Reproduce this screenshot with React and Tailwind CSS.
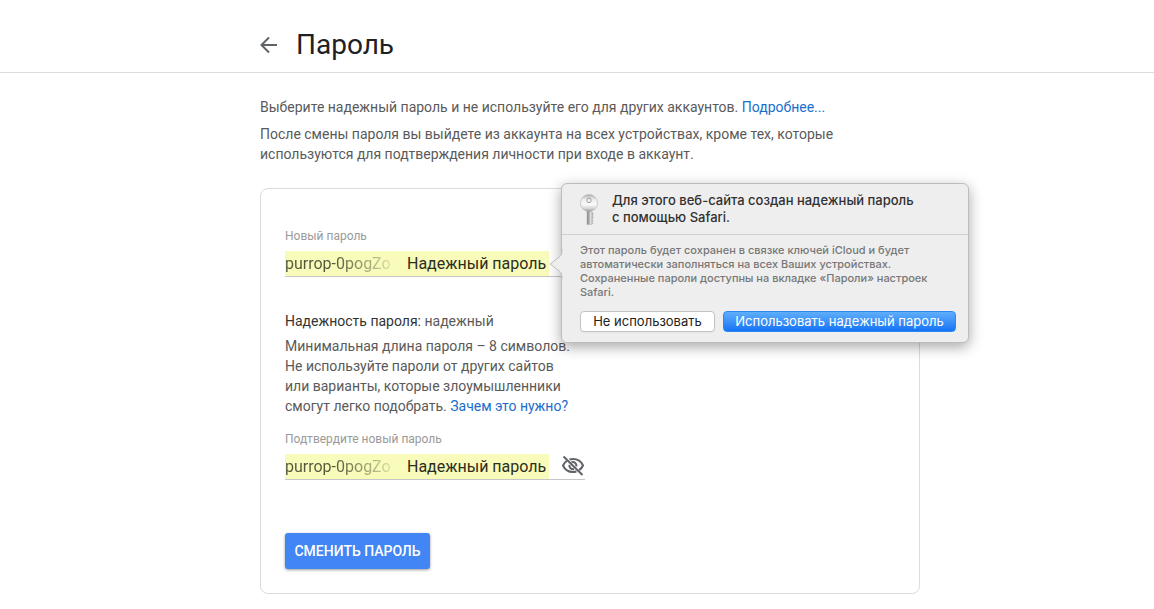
import { useState } from 'react';

const SUGGESTED = 'purrop-0pogZo';

function KeyIcon() {
  return (
    <svg width="22" height="33" viewBox="0 0 22 33" aria-hidden="true" className="shrink-0">
      <defs>
        <linearGradient id="keyHead" x1="0" y1="0" x2="0" y2="1">
          <stop offset="0" stopColor="#b0b0b0" />
          <stop offset="0.3" stopColor="#ededed" />
          <stop offset="0.6" stopColor="#fafafa" />
          <stop offset="0.85" stopColor="#cfcfcf" />
          <stop offset="1" stopColor="#909090" />
        </linearGradient>
        <linearGradient id="keyStem" x1="0" y1="0" x2="1" y2="0">
          <stop offset="0" stopColor="#7d7d7d" />
          <stop offset="0.4" stopColor="#f0f0f0" />
          <stop offset="1" stopColor="#a5a5a5" />
        </linearGradient>
      </defs>
      <path d="M9 17h4v2l2 1v2l-1 1 1.500 1.500-1.500 1.500 1 1.500-1 1.500 1 1.500-2 1H9z" fill="url(#keyStem)" stroke="#a0a0a0" strokeWidth="0.5" />
      <path d="M11 18v13" stroke="#6d6d6d" strokeWidth="0.8" />
      <circle cx="11" cy="10" r="8.500" fill="url(#keyHead)" stroke="#b0b0b0" strokeWidth="0.6" />
      <circle cx="11" cy="7.500" r="2.200" fill="#f0f0f0" stroke="#a0a0a0" strokeWidth="1" />
    </svg>
  );
}

function EyeOffIcon() {
  return (
    <svg width="24" height="24" viewBox="0 0 24 24" fill="none" stroke="#5f6368" strokeWidth="2" aria-hidden="true">
      <path d="M8.500 5.500C9.600 5.200 10.800 5 12 5c4.500 0 8.300 2.700 10 6.500-.8 1.900-2.200 3.600-3.900 4.700M15.500 17.500c-1.100.3-2.300.5-3.500.5-4.500 0-8.300-2.700-10-6.500.8-1.900 2.200-3.500 3.900-4.700" />
      <path d="M10.500 8.200c2.600-.9 5.300 1.200 4.900 4.100M13 15.200c-2.700.6-5-1.700-4.600-4.300" />
      <path d="M2.500 2.500l19 18.500" />
    </svg>
  );
}

function PasswordField({ id, label, value, onChange, children }) {
  return (
    <div className="w-[300px]">
      <label htmlFor={id} className="block text-[12px] leading-4 text-[#9a9a9a]">
        {label}
      </label>
      <div className="mt-[7px] flex items-start border-b border-[#c6c6c6]">
        <div className="flex h-[25px] w-[264px] shrink-0 items-center bg-[#f8fbb9] text-[16px]">
          <input
            id={id}
            type="text"
            value={value}
            onChange={onChange}
            className="w-[122px] bg-linear-to-r from-[#55573c] from-40% to-[#f8fbb9] to-95% bg-clip-text text-transparent outline-none"
          />
          <span className="whitespace-nowrap text-[#2c2d1c]">Надежный пароль</span>
        </div>
        {children}
      </div>
    </div>
  );
}

function SafariPopover({ onClose }) {
  return (
    <div
      role="dialog"
      aria-label="Надежный пароль"
      className="absolute top-[-45px] left-[276px] z-10 w-[408px] rounded-md border border-[#bdbdbd] bg-[#eeeeee] font-[Inter,sans-serif] shadow-[0_4px_14px_rgba(0,0,0,0.35)]"
    >
      <svg width="13" height="30" viewBox="0 0 13 30" aria-hidden="true" className="absolute top-[65px] -left-3">
        <path d="M13 0C12.500 5 11 7 8 9L0 15l8 6c3 2 4.500 4 5 9z" fill="#eeeeee" />
        <path d="M12 0c0 5-1 7-4 9L0 15l8 6c3 2 4 4 4 9" fill="none" stroke="#bdbdbd" />
      </svg>
      <div className="flex h-[51px] items-center gap-3 border-b border-[#d0d0d0] pl-4">
        <KeyIcon />
        <p className="text-[13px] leading-[17px] font-medium text-[#303030]">
          Для этого веб-сайта создан надежный пароль
          <br />
          с помощью Safari.
        </p>
      </div>
      <p className="px-[18px] pt-2 pb-3 text-[11px] leading-[14px] font-medium text-[#777777]">
        Этот пароль будет сохранен в связке ключей iCloud и будет
        <br />
        автоматически заполняться на всех Ваших устройствах.
        <br />
        Сохраненные пароли доступны на вкладке «Пароли» настроек
        <br />
        Safari.
      </p>
      <div className="flex gap-2 pr-3 pb-[10px] pl-[18px] text-[13px]">
        <button
          type="button"
          onClick={onClose}
          className="h-[21px] w-[135px] rounded border border-[#c4c4c4] bg-white leading-[19px] text-[#222222] shadow-xs"
        >
          Не использовать
        </button>
        <button
          type="button"
          onClick={onClose}
          className="h-[21px] flex-1 rounded border border-[#2f86f0] bg-linear-to-b from-[#5faefa] to-[#1273f5] leading-[19px] whitespace-nowrap text-white"
        >
          Использовать надежный пароль
        </button>
      </div>
    </div>
  );
}

function App() {
  const [password, setPassword] = useState(SUGGESTED);
  const [confirm, setConfirm] = useState(SUGGESTED);
  const [popoverOpen, setPopoverOpen] = useState(true);

  const handleSubmit = (e) => {
    e.preventDefault();
  };

  return (
    <div className="min-h-screen bg-white font-[Roboto,sans-serif] text-[14px] leading-5 text-[#5a5a5a]">
      <header className="border-b border-[#dcdcdc] pl-[26px]">
        <div className="mx-auto flex h-[72px] max-w-[660px] items-end gap-4 pb-[7px]">
          <a href="#back" aria-label="Назад" className="mb-2">
            <svg width="20" height="24" viewBox="0 0 20 24" fill="none" stroke="#5f6368" strokeWidth="2" aria-hidden="true">
              <path d="M17 12H2M9 4.500L1.500 12 9 19.500" />
            </svg>
          </a>
          <h1 className="text-[28px] leading-10 text-[#202124]">Пароль</h1>
        </div>
      </header>

      <main className="pt-6 pb-[15px] pl-[26px]">
        <div className="mx-auto max-w-[660px]">
          <p>
            Выберите надежный пароль и не используйте его для других аккаунтов.{' '}
            <a href="#more" className="text-[#1a6dcc]">Подробнее...</a>
          </p>
          <p className="mt-[7px]">
            После смены пароля вы выйдете из аккаунта на всех устройствах, кроме тех, которые
            <br />
            используются для подтверждения личности при входе в аккаунт.
          </p>

          <form onSubmit={handleSubmit} className="mt-6 rounded-lg border border-[#dadce0] px-6 pt-[39px] pb-6">
            <div className="relative">
              <PasswordField
                id="new-password"
                label="Новый пароль"
                value={password}
                onChange={(e) => setPassword(e.target.value)}
              />
              {popoverOpen && <SafariPopover onClose={() => setPopoverOpen(false)} />}
            </div>

            <p className="mt-[34px]">
              <span className="text-[#333333]">Надежность пароля:</span> надежный
            </p>
            <p className="mt-[5px] mb-[15px]">
              Минимальная длина пароля – 8 символов.
              <br />
              Не используйте пароли от других сайтов
              <br />
              или варианты, которые злоумышленники
              <br />
              смогут легко подобрать.{' '}
              <a href="#why" className="text-[#1a6dcc]">Зачем это нужно?</a>
            </p>

            <PasswordField
              id="confirm-password"
              label="Подтвердите новый пароль"
              value={confirm}
              onChange={(e) => setConfirm(e.target.value)}
            >
              <button type="button" aria-label="Показать пароль" className="ml-3 h-[22px]">
                <EyeOffIcon />
              </button>
            </PasswordField>

            <button
              type="submit"
              className="mt-[53px] block h-9 w-[145px] rounded-[3px] bg-[#4285f4] font-medium whitespace-nowrap text-white uppercase shadow-[0_1px_3px_rgba(0,0,0,0.4)]"
            >
              Сменить пароль
            </button>
          </form>
        </div>
      </main>
    </div>
  );
}

export default App;
